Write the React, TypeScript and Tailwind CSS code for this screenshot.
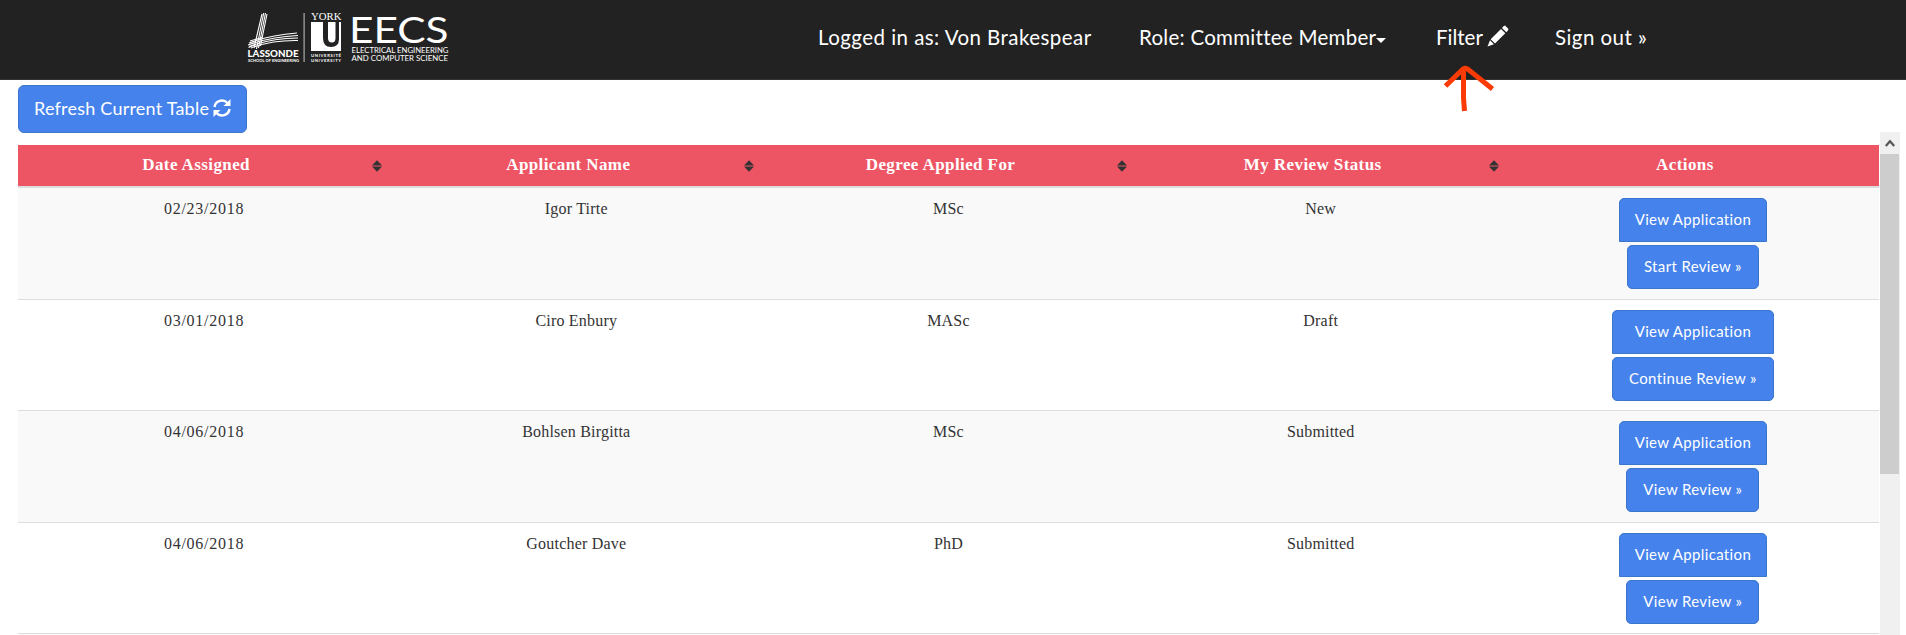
import React from 'react';

const rows = [
  { date: '02/23/2018', name: 'Igor Tirte', degree: 'MSc', status: 'New', action: 'Start Review »', h: 'h-[111px]', w1: 'w-[148px]', w2: 'w-[132px]' },
  { date: '03/01/2018', name: 'Ciro Enbury', degree: 'MASc', status: 'Draft', action: 'Continue Review »', h: 'h-[111px]', w1: 'w-[162px]', w2: 'w-[162px]' },
  { date: '04/06/2018', name: 'Bohlsen Birgitta', degree: 'MSc', status: 'Submitted', action: 'View Review »', h: 'h-[112px]', w1: 'w-[148px]', w2: 'w-[133px]' },
  { date: '04/06/2018', name: 'Goutcher Dave', degree: 'PhD', status: 'Submitted', action: 'View Review »', h: 'h-[111px]', w1: 'w-[148px]', w2: 'w-[133px]' },
];

const heads = ['Date Assigned', 'Applicant Name', 'Degree Applied For', 'My Review Status', 'Actions'];

function Logo() {
  return (
    <svg className="overflow-visible" width="204" height="56" viewBox="246 10 204 56" fill="#fff" fontFamily="Lato, sans-serif">
      <g stroke="#fff" strokeWidth="1.1" fill="none">
        <path d="M262 14 254 48M263.700 13 256.500 49M265.500 13 258.500 48M267 14 260.500 46" />
        <path d="M249 43Q270 35 297 33M248 45Q270 37 298 35.500M249 46.500Q272 38 298 38M251 48Q272 40 298 40.500" />
        <path d="M250 41 262 37.500M248.500 47.500 256 44.500" />
      </g>
      <text x="247.500" y="56.600" fontSize="8.500" fontWeight="900" textLength="51" lengthAdjust="spacingAndGlyphs">LASSONDE</text>
      <text x="248" y="61.600" fontSize="3.600" fontWeight="700" textLength="51" lengthAdjust="spacingAndGlyphs">SCHOOL OF ENGINEERING</text>
      <rect x="303.500" y="13" width="1.200" height="49" fill="#aaa" />
      <text x="311" y="19.600" fontSize="9.500" fontFamily="Liberation Serif, serif" textLength="30.500" lengthAdjust="spacingAndGlyphs">YORK</text>
      <path d="M311 22H341V51H311Z" />
      <path d="M323 22V38Q323 47 331 47Q339 47 339 39V22H335.500V38Q335.500 42.500 332 42.500Q328 42.500 328 38V22Z" fill="#222" />
      <text x="311" y="57" fontSize="4.200" fontWeight="700" textLength="30">UNIVERSITÉ</text>
      <text x="311" y="61.700" fontSize="4.200" fontWeight="700" textLength="30">UNIVERSITY</text>
      <text x="349" y="42.500" fontSize="37" textLength="99.500" lengthAdjust="spacingAndGlyphs">EECS</text>
      <text x="351.500" y="53" fontSize="7.700" textLength="97" lengthAdjust="spacingAndGlyphs">ELECTRICAL ENGINEERING</text>
      <text x="351.500" y="61" fontSize="7.700" textLength="96.500" lengthAdjust="spacingAndGlyphs">AND COMPUTER SCIENCE</text>
    </svg>
  );
}

function SortIcon() {
  return (
    <svg className="h-3 w-[10px] shrink-0" viewBox="0 0 10 12" fill="#333">
      <path d="M5 0.300 10 5.400H0ZM5 11.700 10 6.600H0Z" />
    </svg>
  );
}

export default function App() {
  return (
    <div className="flex h-[635px] w-[1906px] flex-col overflow-hidden bg-white font-['Lato',sans-serif] text-white">
      <header className="relative flex h-20 shrink-0 items-start border-b border-[#333] bg-[#222] pl-[246px] text-[20.5px] leading-[28px]">
        <div className="h-14 w-[204px] shrink-0 pt-[10px]"><Logo /></div>
        <nav className="flex pt-[23px] whitespace-nowrap">
          <span className="ml-[368px] w-[321px] tracking-[0.450px]">Logged in as: Von Brakespear</span>
          <span className="flex w-[297px] items-center tracking-[0.270px]">
            Role: Committee Member
            <svg className="mt-1.5 h-[5px] w-[10px]" viewBox="0 0 10 5" fill="currentColor"><path d="M0 0H10L5 5Z" /></svg>
          </span>
          <span className="flex w-[119px]">
            Filter
            <svg className="ml-1 mt-[2px] h-[22px] w-[22px]" viewBox="0 0 22 22" fill="currentColor">
              <path d="M16.500 1.200 18 .5 21.500 4 20.800 5.700 19.300 7.200 15 2.900ZM14 3.900 18.300 8.200 8 18.500 3.700 14.200ZM3 15.300 6.900 19.200 .5 21.500Z" />
            </svg>
          </span>
          <span className="tracking-[0.450px]">Sign out »</span>
        </nav>
        <svg className="absolute top-[64px] left-[1442px] h-[48px] w-[54px]" viewBox="0 0 54 48" fill="none" stroke="#fb3b05" strokeWidth="5">
          <path d="M3.500 22 20 6Q23 2 28 7L50.500 25M21.500 4V34L22.500 47" />
        </svg>
      </header>
      <div className="flex min-h-0 flex-1">
        <main className="ml-[18px] w-[1861px] shrink-0 pt-[5px]">
          <button className="flex h-12 w-[229px] items-center rounded-[6px] border border-[#3a76cc] bg-[#4582ec] pb-[2px] pl-[15px] text-[18px] tracking-[0.220px] whitespace-nowrap">
            Refresh Current Table
            <svg className="ml-1 h-[18px] w-[18px]" viewBox="0 0 18 18" fill="none" stroke="white" strokeWidth="2.500">
              <path d="M1.500 8A7.500 7.500 0 0 1 14.500 4M16.500 10A7.500 7.500 0 0 1 3.500 14" />
              <path d="M17.500 0V7H10.500ZM.5 18V11H7.500Z" fill="white" stroke="none" />
            </svg>
          </button>
          <div className="mt-3 font-['Liberation_Serif',serif] text-[16px]">
            <div className="grid h-[43px] grid-cols-5 border-b-2 border-[#ddd] bg-[#ed5565] text-[17px] font-bold tracking-[0.400px]">
              {heads.map((h, i) => (
                <div key={h} className="flex items-center pr-2">
                  <span className="flex-1 pr-1.5 pb-[2px] pl-2 text-center whitespace-nowrap">{h}</span>
                  {i < 4 ? <SortIcon /> : <span className="w-[10px]" />}
                </div>
              ))}
            </div>
            {rows.map((r, i) => (
              <div key={i} className={`grid grid-cols-5 text-center text-[#333] tracking-[0.200px] ${r.h} ${i ? 'border-t border-[#ddd]' : ''} ${i % 2 ? 'bg-white' : 'bg-[#f9f9f9]'}`}>
                <div className="pt-[9px] tracking-[0.730px]">{r.date}</div>
                <div className="pt-[9px]">{r.name}</div>
                <div className="pt-[9px]">{r.degree}</div>
                <div className="pt-[9px]">{r.status}</div>
                <div className="flex flex-col items-center gap-[3px] pt-[10px] font-['Lato',sans-serif] text-[15px] tracking-[0.350px] text-white">
                  <button className={`h-11 rounded-t-[5px] border border-[#3a76cc] bg-[#4582ec] pb-[2px] ${r.w1}`}>View Application</button>
                  <button className={`h-11 rounded-[5px] border border-[#3a76cc] bg-[#4582ec] pb-[2px] ${r.w2}`}>{r.action}</button>
                </div>
              </div>
            ))}
            <div className="h-2 border-t border-[#ddd] bg-[#f9f9f9]" />
          </div>
        </main>
        <aside className="mt-[52px] ml-px w-5 bg-[#f0f0f0]">
          <div className="flex h-[22px] items-center justify-center">
            <svg className="h-[8px] w-[10px]" viewBox="0 0 10 8" fill="none" stroke="#555" strokeWidth="2.200"><path d="M.8 7 5 2.200 9.200 7" /></svg>
          </div>
          <div className="h-[320px] w-[19px] bg-[#cdcdcd]" />
        </aside>
      </div>
    </div>
  );
}
